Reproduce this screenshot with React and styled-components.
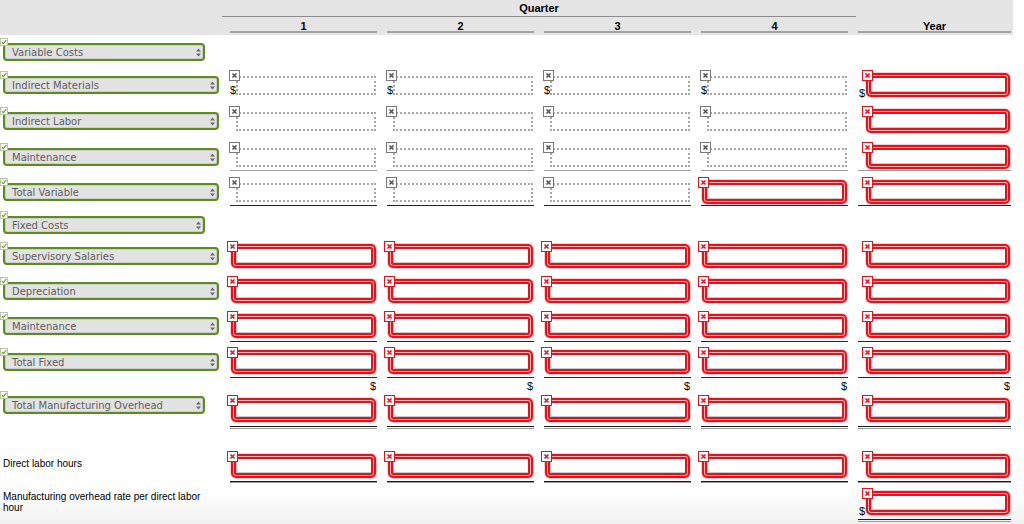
import React from "react";
import styled, { createGlobalStyle } from "styled-components";

const COLS = "220px repeat(4, 147px) 153px";

const GlobalStyle = createGlobalStyle`
  html, body {
    margin: 0;
    padding: 0;
  }
  body {
    min-height: 524px;
    background: linear-gradient(to bottom, #fff 492px, #f1f1f1 524px) no-repeat;
    font-family: "Liberation Sans", Arial, sans-serif;
    color: #000;
  }
`;

const Header = styled.div`
  width: 1013px;
  height: 35px;
  background: #e5e5e5;
`;

const HeadRow = styled.div`
  display: grid;
  grid-template-columns: ${COLS};
  column-gap: 10px;
`;

const QuarterHead = styled.div`
  grid-column: 2 / 6;
  margin: 0 -8px;
  height: 16px;
  line-height: 16px;
  border-bottom: 1px solid #8c8c8c;
  text-align: center;
  font-size: 11px;
  font-weight: bold;
`;

const ColHead = styled.div`
  padding-top: 4px;
  line-height: 10px;
  font-size: 11px;
  font-weight: bold;
  text-align: center;
  border-bottom: 2px solid #a3a3a3;
`;

const Row = styled.div`
  display: grid;
  grid-template-columns: ${COLS};
  column-gap: 10px;
  box-sizing: border-box;
  height: ${(p) => p.h}px;
  padding-top: ${(p) => p.pt || 0}px;
`;

const LabelCell = styled.div`
  display: flex;
  align-items: flex-start;
  padding-left: 3px;
`;

const Slot = styled.div`
  height: 26px;
  display: flex;
  align-items: center;
  margin-top: ${(p) => p.shift || 0}px;
`;

const lines = {
  light: "linear-gradient(#9c9c9c, #9c9c9c) bottom / 100% 1px no-repeat",
  dark: "linear-gradient(#262626, #262626) bottom / 100% 1px no-repeat",
  double:
    "linear-gradient(to top, #9a9a9a 0 1px, transparent 1px 2px, #1a1a1a 2px 3px) bottom / 100% 3px no-repeat",
  shadow: "linear-gradient(to top, #9a9a9a 0 1px, #1a1a1a 1px 2px) bottom / 100% 2px no-repeat",
};

const ValueCell = styled.div`
  display: flex;
  justify-content: flex-end;
  align-items: flex-start;
  padding-right: 1px;
  background: ${(p) => (p.line ? lines[p.line] : "none")};
`;

const DollarCell = styled.div`
  text-align: right;
  padding-right: 1px;
  font-size: 11px;
  line-height: 16px;
`;

const Select = styled.div`
  position: relative;
  box-sizing: border-box;
  width: ${(p) => (p.short ? 202 : 216)}px;
  height: 18px;
  display: flex;
  align-items: center;
  padding-left: 7px;
  border: 2px solid #5d8c22;
  border-radius: 4px;
  background: #e2e2e2;
  box-shadow: inset 0 0 0 1px #cdcdcd;
  font-family: "DejaVu Sans", Verdana, sans-serif;
  font-size: 10px;
  color: #5e5e5e;
  white-space: nowrap;
`;

const Arrows = styled.svg`
  margin-left: auto;
  margin-right: 2px;
  flex: none;
`;

const Check = styled.span`
  position: absolute;
  left: -5px;
  top: -7px;
  width: 8px;
  height: 8px;
  box-sizing: border-box;
  display: flex;
  background: #fff;
  border: 1px solid #b8c6a4;
`;

const PlainLabel = styled.div`
  max-width: 205px;
  font-size: 10px;
  line-height: 11px;
`;

const DottedBox = styled.div`
  position: relative;
  box-sizing: border-box;
  width: 140px;
  height: 19px;
  background: #fff;
  border: 2px dotted #a6a6a6;
`;

const RedBox = styled.div`
  position: relative;
  box-sizing: border-box;
  width: ${(p) => p.w}px;
  height: 24px;
  background: #fff;
  border: 2px solid #e3131d;
  border-radius: 5px;
  box-shadow: 0 0 0 1px rgba(235, 90, 98, 0.3), inset 0 0 0 1px #f7b5b8,
    inset 0 0 0 3px #e3131d, inset 4px -4px 0 #c9c9c9;
`;

const ErrIcon = styled.span`
  position: absolute;
  left: ${(p) => (p.red ? -6 : -9)}px;
  top: ${(p) => (p.red ? -5 : -8)}px;
  width: 11px;
  height: 11px;
  box-sizing: border-box;
  display: flex;
  align-items: center;
  justify-content: center;
  background: #fff;
  border: 1px solid ${(p) => (p.red ? "#e3131d" : "#7a7a7a")};
`;

const Dollar = styled.span`
  position: absolute;
  left: ${(p) => (p.red ? -9 : -8)}px;
  bottom: ${(p) => (p.red ? -4 : -3)}px;
  font-size: 11px;
  line-height: 11px;
`;

const Cross = ({ color }) => (
  <svg width="7" height="7" viewBox="0 0 7 7">
    <path d="M1.5 1.5L5.5 5.5M5.5 1.5L1.5 5.5" stroke={color} strokeWidth="1.6" />
  </svg>
);

const SelectBox = ({ label, short }) => (
  <Select short={short}>
    <Check>
      <svg width="6" height="6" viewBox="0 0 6 6">
        <path d="M0.8 3.2L2.3 4.7L5.4 1" fill="none" stroke="#5f9a22" strokeWidth="1.1" />
      </svg>
    </Check>
    {label}
    <Arrows width="5" height="9" viewBox="0 0 5 9">
      <path d="M0 3.5L2.5 0.5L5 3.5Z M0 5.5L2.5 8.5L5 5.5Z" fill="#6a6a6a" />
    </Arrows>
  </Select>
);

// d = dotted, r = red in a quarter, y = red in the year column; "$" adds the sign
const Field = ({ type }) => {
  const money = type.endsWith("$");
  if (type.startsWith("d")) {
    return (
      <DottedBox>
        <ErrIcon>
          <Cross color="#555" />
        </ErrIcon>
        {money && <Dollar>$</Dollar>}
      </DottedBox>
    );
  }
  return (
    <RedBox w={type.startsWith("y") ? 144 : 145}>
      <ErrIcon red>
        <Cross color="#e3131d" />
      </ErrIcon>
      {money && <Dollar red>$</Dollar>}
    </RedBox>
  );
};

const RED = ["r", "r", "r", "r", "y"];

const rows = [
  { select: "Variable Costs", short: true, h: 35, pt: 4 },
  { select: "Indirect Materials", h: 34, pt: 2, cells: ["d$", "d$", "d$", "d$", "y$"] },
  { select: "Indirect Labor", h: 36, pt: 4, cells: ["d", "d", "d", "d", "y"] },
  { select: "Maintenance", h: 31, pt: 4, line: "light", cells: ["d", "d", "d", "d", "y"] },
  { select: "Total Variable", h: 35, pt: 8, line: "dark", cells: ["d", "d", "d", "r", "y"] },
  { select: "Fixed Costs", short: true, h: 34, pt: 6 },
  { select: "Supervisory Salaries", h: 35, pt: 3, cells: RED },
  { select: "Depreciation", h: 35, pt: 3, cells: RED },
  { select: "Maintenance", h: 32, pt: 3, line: "dark", cells: RED },
  { select: "Total Fixed", h: 36, pt: 7, line: "dark", cells: RED },
  { dollars: true, h: 16 },
  { select: "Total Manufacturing Overhead", short: true, h: 35, pt: 3, shift: -5, line: "double", cells: RED },
  { text: "Direct labor hours", h: 54, pt: 24, shift: -3, line: "shadow", cells: RED },
  {
    text: "Manufacturing overhead rate per direct labor hour",
    h: 39,
    pt: 7,
    shift: -1,
    line: "double",
    cells: [null, null, null, null, "y$"],
  },
];

const BudgetRow = ({ row }) => {
  if (row.dollars) {
    return (
      <Row h={row.h}>
        <div />
        {[0, 1, 2, 3, 4].map((i) => (
          <DollarCell key={i}>$</DollarCell>
        ))}
      </Row>
    );
  }
  return (
    <Row h={row.h} pt={row.pt}>
      <LabelCell>
        <Slot shift={row.shift}>
          {row.select ? (
            <SelectBox label={row.select} short={row.short} />
          ) : (
            <PlainLabel>{row.text}</PlainLabel>
          )}
        </Slot>
      </LabelCell>
      {row.cells &&
        row.cells.map((type, i) => (
          <ValueCell key={i} line={type ? row.line : null}>
            {type && (
              <Slot>
                <Field type={type} />
              </Slot>
            )}
          </ValueCell>
        ))}
    </Row>
  );
};

const App = () => (
  <>
    <GlobalStyle />
    <Header>
      <HeadRow>
        <QuarterHead>Quarter</QuarterHead>
      </HeadRow>
      <HeadRow>
        <div />
        {["1", "2", "3", "4", "Year"].map((h) => (
          <ColHead key={h}>{h}</ColHead>
        ))}
      </HeadRow>
    </Header>
    {rows.map((row, i) => (
      <BudgetRow key={i} row={row} />
    ))}
  </>
);

export default App;
